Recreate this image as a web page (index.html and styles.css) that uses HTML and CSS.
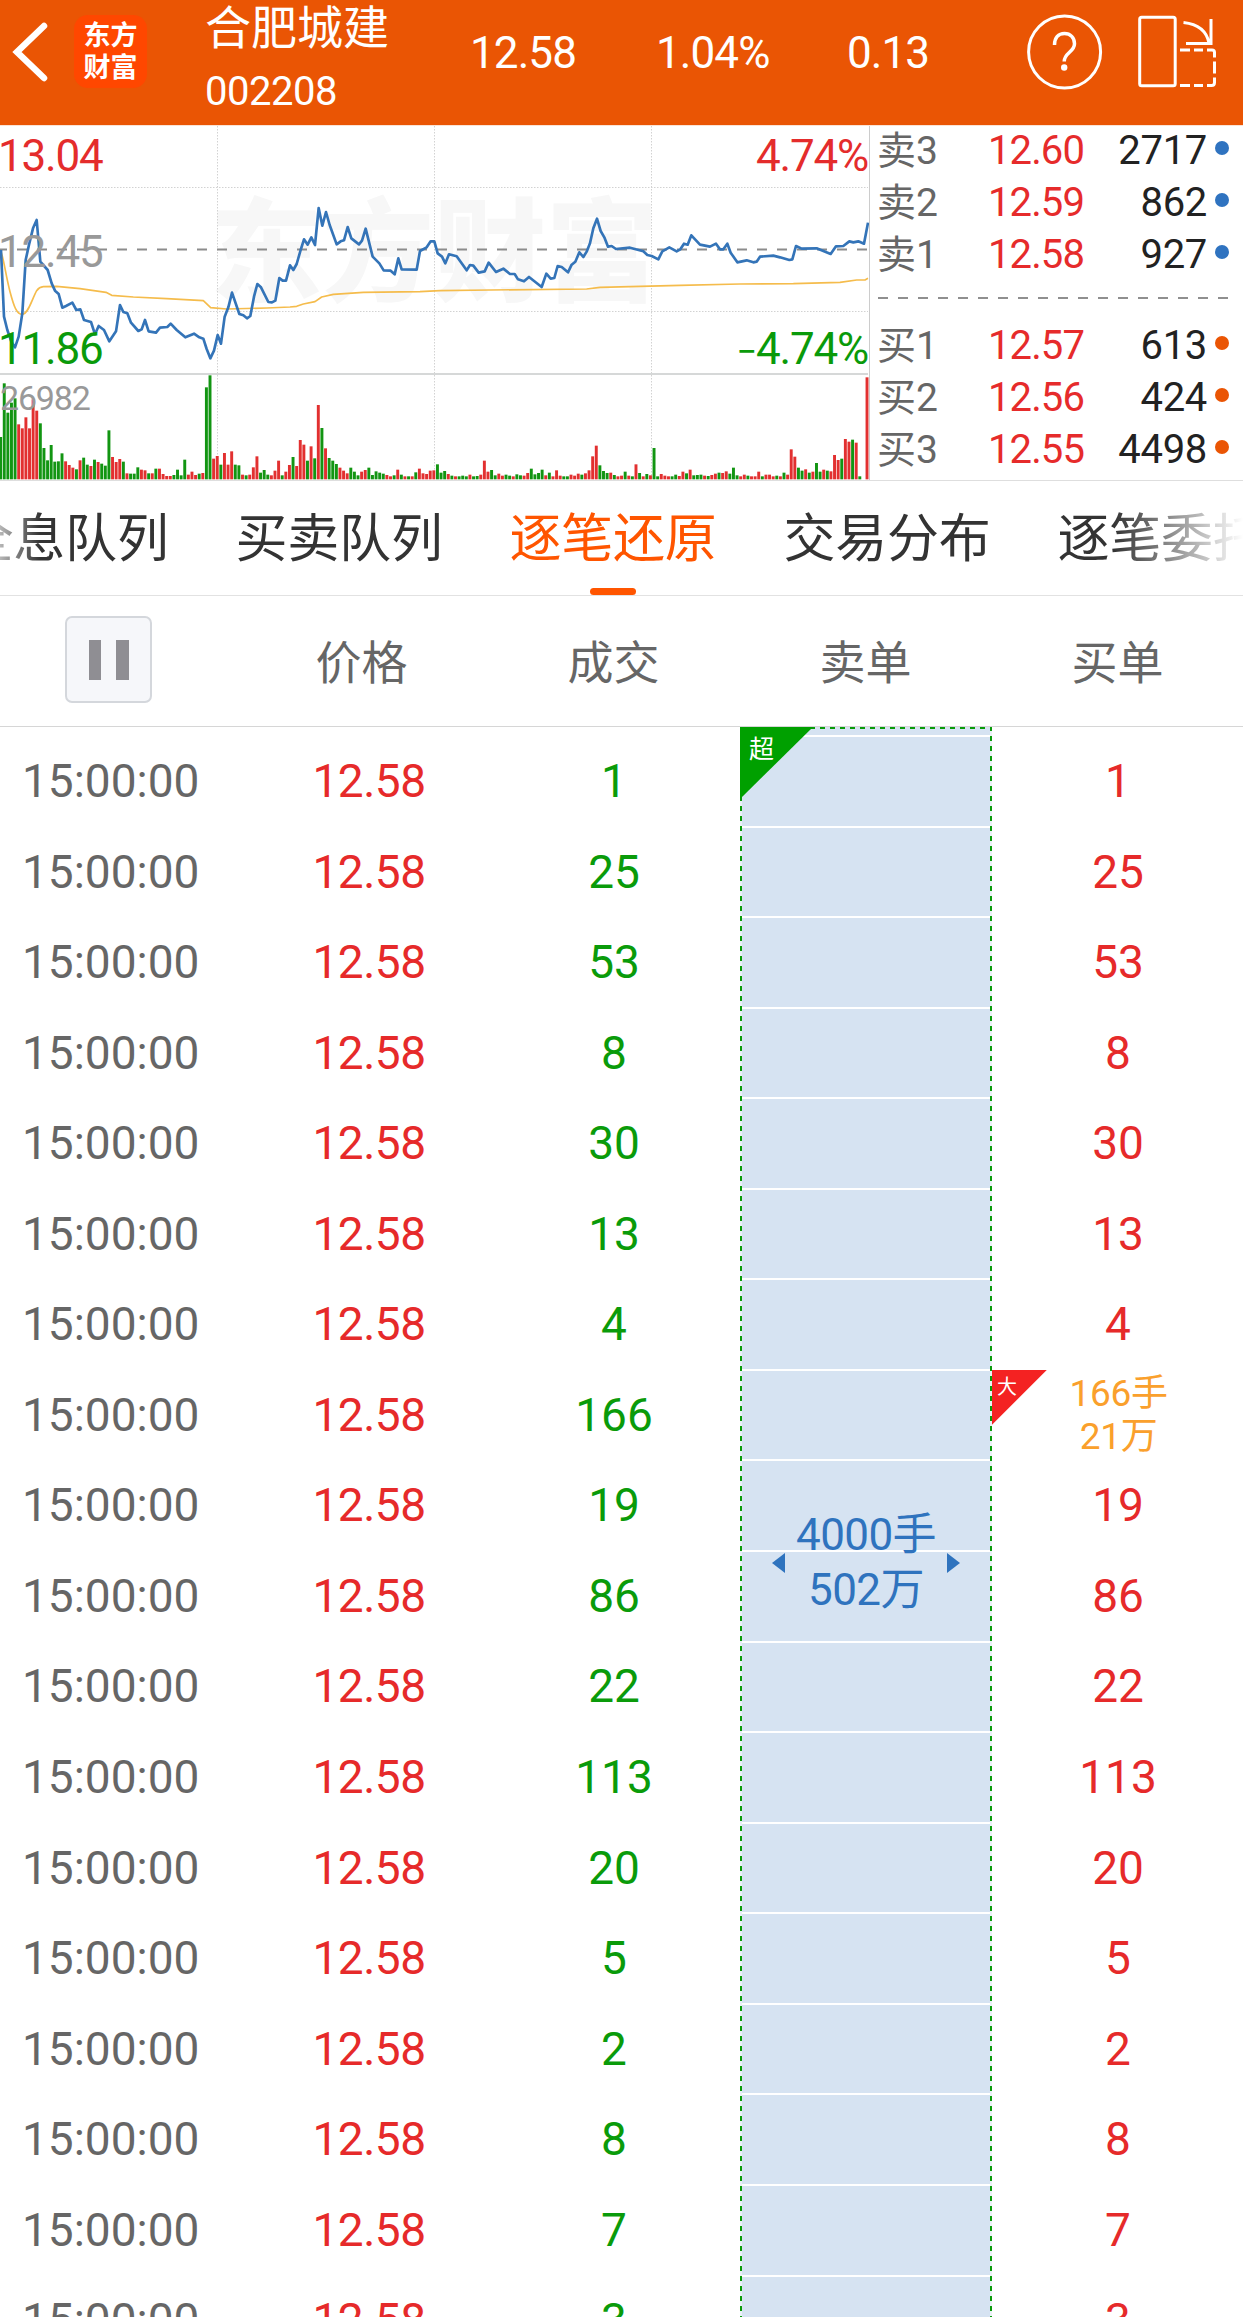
FILE: index.html
```html
<!DOCTYPE html>
<html lang="zh-CN">
<head>
<meta charset="utf-8">
<title>合肥城建 002208</title>
<link rel="stylesheet" href="styles.css">
</head>
<body>
<header class="top">
  <svg class="back" width="60" height="106" viewBox="0 0 60 106"><path d="M44 26 17 52 44 78" fill="none" stroke="#fff" stroke-width="6.5" stroke-linecap="round" stroke-linejoin="miter"/></svg>
  <div class="logo"><span>东方</span><span>财富</span></div>
  <div class="stock"><h1>合肥城建</h1><span>002208</span></div>
  <div class="quote"><span class="q1">12.58</span><span class="q2">1.04%</span><span class="q3">0.13</span></div>
  <svg class="tools" width="220" height="125" viewBox="1023 0 220 125" fill="none" stroke="#fff" stroke-width="3">
    <circle cx="1064.6" cy="52" r="36"/>
    <path d="M1054.5 45c0-7.500 4-11.500 10-11.500s10 4.200 10 10.200c0 8.300-10.300 8.800-10.300 17.800" stroke-width="3.500"/>
    <circle cx="1064.200" cy="67.500" r="3.200" fill="#fff" stroke="none"/>
    <rect x="1139.700" y="17.200" width="35.500" height="68.500" rx="2"/>
    <path d="M1183.500 22.500c14 1.500 23 8 25.500 20.500M1211 19v24.500h-25"/>
    <path d="M1180 50h10m4 0h9m4 0h5q2.500 0 2.500 2.500v5m0 4v12m0 4v5q0 3-3 3h-4.500m-4 0h-9m-4 0h-10"/>
  </svg>
</header>

<section class="market">
  <svg class="chart" width="870" height="354" viewBox="0 0 869 354">
    <text class="mark" x="210" y="167" textLength="448">东方财富</text>
    <g class="grid">
      <path d="M0 61.500h868M0 185.500h868M217.500 0v353M434.500 0v353M651.500 0v353"/>
    </g>
    <path d="M-3 123.500H868" stroke="#8c8c8c" stroke-width="2" stroke-dasharray="10 10"/>
    <path d="M0 248H868" stroke="#d6d8d8" stroke-width="2"/>
    <g id="volume" transform="scale(.33333) translate(0 -18)"></g>
    <g transform="scale(.33333) translate(0 -18)" fill="none" stroke-linejoin="round">
      <path stroke="#f5bc4c" stroke-width="5" d="M3 395C12 420 18 470 30 515S50 583 67 583 95 540 110 512Q118 501 130 500L170 499 240 506 318 517 335 526 400 531 500 536 610 542 632 563 680 567 800 564 870 561 890 559 910 552 945 545 965 531 1000 523 1090 517 1260 515 1320 512 1470 510 1760 507 1800 502 2040 496 2220 492 2380 491 2520 487 2570 480 2595 480 2604 475"/>
      <path stroke="#3474b8" stroke-width="8" d="M3 390 12 590 22 630 34 665 45 682 56 650 67 580 77 420 88 370 99 325 110 300 121 425 143 450 155 490 165 512 176 522 187 563 198 558 217 548 229 570 241 568 252 600 273 606 285 643 296 618 312 630 328 664 348 634 360 555 370 576 382 580 393 608 415 633 425 628 435 600 446 634 468 638 480 623 502 621 512 611 530 630 556 652 582 641 598 652 610 656 620 687 631 715 642 692 653 645 663 671 674 590 685 562 696 518 718 582 730 586 741 595 751 588 762 530 772 492 783 502 805 546 816 547 826 542 838 474 848 482 858 482 870 436 880 450 890 432 902 390 912 358 923 374 934 352 945 375 956 264 967 317 978 276 989 315 1010 373 1022 364 1032 361 1043 321 1054 355 1077 373 1086 362 1097 326 1118 410 1138 430 1151 451 1172 452 1184 463 1195 415 1205 448 1250 449 1260 393 1280 382 1292 364 1303 364 1313 400 1326 410 1336 430 1347 403 1370 409 1400 451 1410 435 1420 437 1436 458 1454 454 1466 428 1488 456 1510 446 1530 462 1544 462 1554 478 1572 484 1587 471 1625 501 1639 461 1652 476 1663 474 1673 438 1685 441 1704 457 1715 434 1726 425 1738 397 1750 411 1760 395 1770 370 1780 325 1791 296 1802 333 1813 352 1824 380 1835 378 1848 387 1890 383 1930 394 1942 405 1955 408 1975 418 1987 394 2008 382 2030 394 2041 388 2052 371 2063 374 2074 346 2100 374 2130 380 2148 371 2160 388 2170 388 2182 371 2192 398 2212 427 2240 421 2260 427 2270 425 2280 410 2320 407 2340 412 2368 420 2377 418 2388 378 2405 386 2450 385 2492 402 2508 379 2530 378 2548 364 2560 367 2575 364 2592 371 2604 308"/>
    </g>
    <g class="scale">
      <text x="-2" y="44.500" class="up">13.04</text>
      <text x="-2" y="140.500" class="flat">12.45</text>
      <text x="-2" y="237.500" class="down">11.86</text>
      <text x="868" y="44.500" class="up" text-anchor="end">4.74%</text>
      <text x="868" y="237.500" class="down" text-anchor="end"><tspan class="minus">−</tspan>4.74%</text>
      <text x="0" y="283.500" class="flat small">26982</text>
    </g>
  </svg>
  <div class="book">
    <div class="level sell"><span>卖3</span><b>12.60</b><em>2717</em><i></i></div>
    <div class="level sell"><span>卖2</span><b>12.59</b><em>862</em><i></i></div>
    <div class="level sell"><span>卖1</span><b>12.58</b><em>927</em><i></i></div>
    <div class="divider"></div>
    <div class="level buy"><span>买1</span><b>12.57</b><em>613</em><i></i></div>
    <div class="level buy"><span>买2</span><b>12.56</b><em>424</em><i></i></div>
    <div class="level buy"><span>买3</span><b>12.55</b><em>4498</em><i></i></div>
  </div>
</section>

<nav class="tabs">
  <a>全息队列</a><a>买卖队列</a><a class="active">逐笔还原</a><a>交易分布</a><a>逐笔委托</a>
</nav>

<div class="heads">
  <div class="pausebox"><button class="pause" aria-label="暂停"><i></i><i></i></button></div>
  <span>价格</span><span>成交</span><span>卖单</span><span>买单</span>
</div>

<main class="ticks">
  <div class="trades">
    <div class="row"><span>15:00:00</span><b>12.58</b><em>1</em></div>
    <div class="row"><span>15:00:00</span><b>12.58</b><em>25</em></div>
    <div class="row"><span>15:00:00</span><b>12.58</b><em>53</em></div>
    <div class="row"><span>15:00:00</span><b>12.58</b><em>8</em></div>
    <div class="row"><span>15:00:00</span><b>12.58</b><em>30</em></div>
    <div class="row"><span>15:00:00</span><b>12.58</b><em>13</em></div>
    <div class="row"><span>15:00:00</span><b>12.58</b><em>4</em></div>
    <div class="row"><span>15:00:00</span><b>12.58</b><em>166</em></div>
    <div class="row"><span>15:00:00</span><b>12.58</b><em>19</em></div>
    <div class="row"><span>15:00:00</span><b>12.58</b><em>86</em></div>
    <div class="row"><span>15:00:00</span><b>12.58</b><em>22</em></div>
    <div class="row"><span>15:00:00</span><b>12.58</b><em>113</em></div>
    <div class="row"><span>15:00:00</span><b>12.58</b><em>20</em></div>
    <div class="row"><span>15:00:00</span><b>12.58</b><em>5</em></div>
    <div class="row"><span>15:00:00</span><b>12.58</b><em>2</em></div>
    <div class="row"><span>15:00:00</span><b>12.58</b><em>8</em></div>
    <div class="row"><span>15:00:00</span><b>12.58</b><em>7</em></div>
    <div class="row"><span>15:00:00</span><b>12.58</b><em>3</em></div>
  </div>
  <div class="sellorder">
    <div class="corner huge"><span>超</span></div>
    <div class="order"><i class="left"></i><p>4000手<br>502万</p><i class="right"></i></div>
  </div>
  <div class="buys">
    <div class="row">1</div>
    <div class="row">25</div>
    <div class="row">53</div>
    <div class="row">8</div>
    <div class="row">30</div>
    <div class="row">13</div>
    <div class="row">4</div>
    <div class="row big"><div class="corner large"><span>大</span></div><p>166手<br>21万</p></div>
    <div class="row">19</div>
    <div class="row">86</div>
    <div class="row">22</div>
    <div class="row">113</div>
    <div class="row">20</div>
    <div class="row">5</div>
    <div class="row">2</div>
    <div class="row">8</div>
    <div class="row">7</div>
    <div class="row">3</div>
  </div>
</main>
<script src="chart.js"></script>
</body>
</html>
```
FILE: styles.css
```css
* { box-sizing: border-box; }
body {
  margin: 0;
  width: 1243px;
  height: 2317px;
  overflow: hidden;
  background: #fff;
  font-family: Roboto, "Noto Sans CJK SC", sans-serif;
  color: #666;
}
h1, p { margin: 0; font-weight: 400; }
b, em, i { font-weight: 400; font-style: normal; }

.top { display: flex; height: 125px; background: #ea5504; color: #fff; }
.back { width: 74px; padding-right: 14px; flex: none; }
.logo {
  display: flex; flex-direction: column; justify-content: center;
  width: 73px; height: 73px; margin-top: 15px;
  border-radius: 14px; background: #ff4700;
  font-size: 27px; font-weight: 700; line-height: 32px; text-align: center;
}
.stock { width: 265px; margin-left: 58px; }
.stock h1 { font-size: 46px; line-height: 56px; }
.stock span { display: block; font-size: 40px; line-height: 72px; letter-spacing: -.5px; }
.quote { display: flex; width: 553px; font-size: 44px; line-height: 107px; letter-spacing: -.9px; }
.q1 { width: 186px; }
.q2 { width: 191px; }
.tools { flex: none; }

.market { display: flex; height: 356px; border-top: 1px solid #fbe3d5; border-bottom: 1px solid #dedede; }
.chart { display: block; flex: none; border-right: 1px solid #ccc; }
.mark { font-size: 112px; font-weight: 900; fill: #f7f7f7; }
.grid path { fill: none; stroke: #d2d2d2; stroke-width: 1; stroke-dasharray: 1.500 1.500; }
.scale { font-size: 44px; letter-spacing: -1.200px; }
.minus { font-size: 36px; }
.small { font-size: 34px; letter-spacing: -1.200px; }
.up { fill: #e42c2c; }
.down { fill: #0a9a0a; }
.flat { fill: #999; }
.book { flex: 1; padding: 0 14px 0 7px; }
.level { display: flex; height: 52px; font-size: 40px; line-height: 50px; }
.level span { width: 111px; font-size: 39px; }
.level b { color: #e62b2b; letter-spacing: -.9px; }
.level em { flex: 1; text-align: right; color: #222; letter-spacing: -.3px; }
.level i { width: 14px; height: 14px; margin: 15px 0 0 8px; border-radius: 50%; }
.sell i { background: #2f73c0; }
.buy i { background: #ea5504; }
.divider {
  height: 2px; margin: 15px 0 22px 1px;
  background: repeating-linear-gradient(90deg, #8f8f8f 0 10px, transparent 10px 20px);
}

.tabs {
  display: flex; position: relative; height: 115px; padding-left: 0; overflow: hidden;
  border-bottom: 1px solid #e2e2e2; font-size: 52px; line-height: 118px; color: #333;
}
.tabs a { flex: none; width: 274px; text-align: center; letter-spacing: -.2px; }
.tabs a:first-child { margin-left: -72px; }
.tabs .active { display: flex; flex-direction: column; align-items: center; color: #ff5500; }
.active::after { content: ""; width: 46px; height: 7px; margin-top: -11px; border-radius: 3.500px; background: #ff5500; }
.tabs::before, .tabs::after { content: ""; position: absolute; top: 0; height: 113px; z-index: 1; }
.tabs::before { left: -22px; width: 62px; background: linear-gradient(90deg, #fff, #fff0); }
.tabs::after { right: 0; width: 130px; background: linear-gradient(270deg, #fff, #fff0); }

.heads {
  display: grid; grid-template-columns: 235.500px repeat(4, 252px);
  height: 131px; border-bottom: 1px solid #d6d6d6;
  font-size: 46px; line-height: 134px; text-align: center;
}
.pausebox { padding: 20px 0 0 65px; line-height: 0; }
.pause {
  display: flex; justify-content: center; gap: 15px; width: 87px; height: 87px; padding: 22px 0 0;
  border: 2px solid #d4d7dc; border-radius: 7px; background: #f6f7fa;
}
.pause i { width: 12.500px; height: 40px; background: #8f8e93; }

.ticks { display: flex; height: 1590px; overflow: hidden; font-size: 46px; }
.trades, .buys { padding-top: 9px; }
.trades { width: 740px; }
.trades .row { display: grid; grid-template-columns: 243px 252px 1fr; text-align: center; }
.row { height: 90.560px; line-height: 90.560px; }
.row span { text-align: left; padding-left: 22px; }
.row b { color: #e62a2a; letter-spacing: -.5px; }
.row em { color: #0a9b0a; padding-right: 7px; }
.buys { flex: 1; text-align: center; color: #e62a2a; }
.buys .row { padding-left: 1px; }

.sellorder {
  position: relative; width: 252px;
  background:
    repeating-linear-gradient(#0a9b0a 0 5px, #eaf1f8 5px 10px) 0 -1px / 2px 1600px no-repeat,
    repeating-linear-gradient(#0a9b0a 0 5px, #eaf1f8 5px 10px) 250px -1px / 2px 1600px no-repeat,
    repeating-linear-gradient(90deg, #0a9b0a 0 5px, #fff0 5px 10px) 0 0 / 252px 2px no-repeat,
    repeating-linear-gradient(#fff 0 2px, #d6e3f2 2px 90.560px) 0 8px / 252px 1600px no-repeat,
    #d6e3f2;
}
.corner { position: absolute; color: #fff; clip-path: polygon(0 0, 100% 0, 0 100%); }
.corner span { display: block; padding: 0; }
.huge { left: 0; top: 0; width: 73px; height: 72px; background: #00a000; font-size: 25px; line-height: 45px; }
.huge span { padding-left: 9px; }
.order {
  position: absolute; top: 781px; left: 32px; width: 188px; height: 110px;
  display: flex; align-items: center; justify-content: space-between;
  color: #2f73be; font-size: 44px; line-height: 55px; text-align: center; letter-spacing: -.6px;
}
.order i { width: 13px; height: 20px; background: #2f73be; }
.left { clip-path: polygon(100% 0, 100% 100%, 0 50%); }
.right { clip-path: polygon(0 0, 100% 50%, 0 100%); }
.big { position: relative; color: #faa02c; font-size: 37px; line-height: 43px; letter-spacing: -.3px; }
.big p { padding: 2px 0 0 1px; }
.large { left: 0; top: 0; width: 55px; height: 55px; background: #f42222; font-size: 20px; line-height: 34px; }
.row .large span { padding-left: 5px; }
```
FILE: chart.js
```js
// Volume per minute: positive bars are up ticks, negative bars are down ticks.
const volumes = [
  -127, -288, -200, -230, -243, 165, 153, 186, 153, 240, 206, -168, -94, -57, -103, -53, -54, -78, 54, 43,
  35, -30, 57, -65, -44, 40, -59, 52, -47, -41, -147, 67, 52, 61, -53, 18, -17, -17, -36, 29,
  27, -18, 18, -32, 32, 16, 10, 10, -13, -29, -12, -59, 14, 23, 13, -17, 19, -276, -312, 62,
  70, -44, 79, 44, 84, -44, -42, 14, -12, 14, 36, 69, -20, -28, -14, 12, 26, 56, -12, 23,
  43, -67, 40, 118, 104, -56, 99, -63, 223, -154, 93, -64, -56, -46, 35, 26, 18, -35, -23, -12,
  23, 28, -35, -13, -24, -20, -17, 13, 9, -12, 29, -14, 9, -9, 9, -21, 32, 18, 16, 26,
  27, -45, -20, -25, 16, -11, 9, -9, -11, -9, 14, -9, -10, 14, 56, 23, -28, -12, 17, 11,
  -14, -11, 9, -15, -12, 11, 19, -32, -15, -19, -29, 12, -20, 9, 27, 11, -9, -9, 14, 11,
  17, -14, 18, 27, 69, 101, -42, -25, -19, 20, -13, 9, 11, -23, 11, -9, 45, -19, 9, -16,
  12, -94, -9, 16, 11, 9, -9, -14, 10, 23, -18, 29, -12, -13, -14, 11, -10, 13, 17, -20,
  19, 24, -17, -35, -12, 9, 14, -11, 9, 9, 23, -9, 14, 14, 9, -11, 9, -20, 14, 90,
  68, -35, -26, 30, -20, 23, -49, -23, 29, -26, 24, 73, 58, -62, 121, 113, -119, 110, -9, 0, 306
];
const layer = document.getElementById("volume");
volumes.forEach((v, i) => {
  const bar = document.createElementNS("http://www.w3.org/2000/svg", "rect");
  bar.setAttribute("x", 1.9 + 10.83 * i - 4.4);
  bar.setAttribute("y", 1078 - Math.abs(v));
  bar.setAttribute("width", 8.8);
  bar.setAttribute("height", Math.abs(v));
  bar.setAttribute("fill", v > 0 ? "#e23030" : "#129512");
  layer.append(bar);
});
```
